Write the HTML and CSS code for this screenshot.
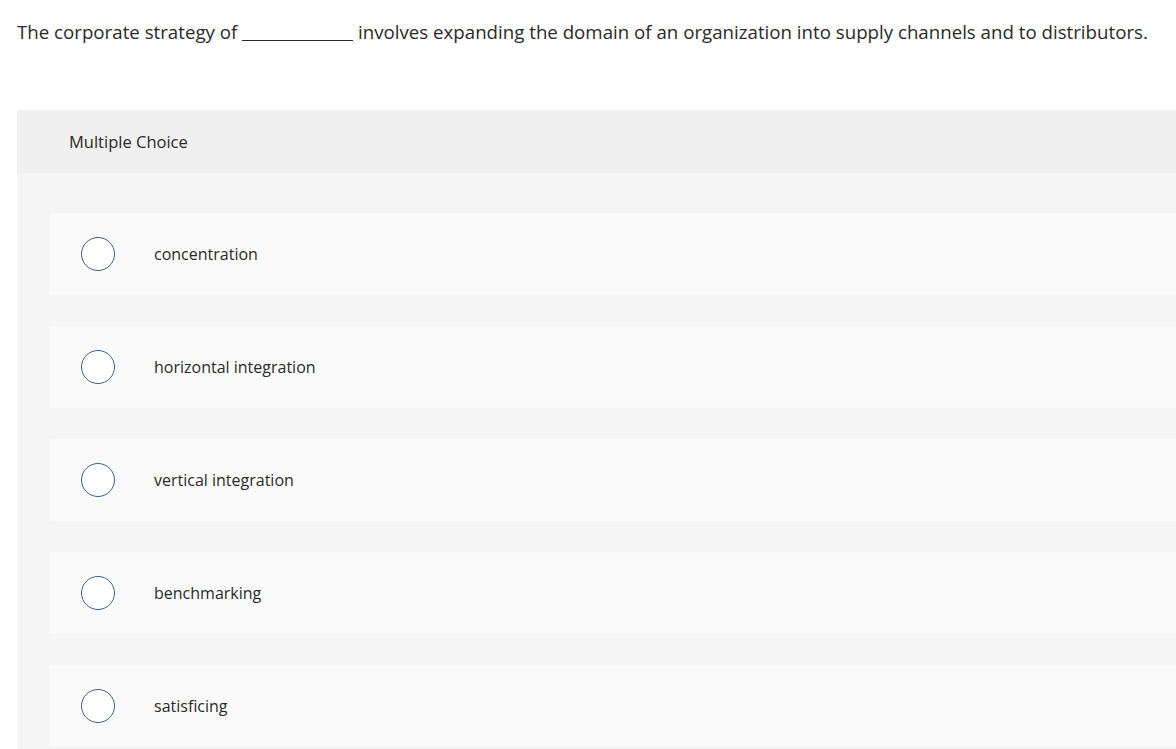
FILE: index.html
```html
<!DOCTYPE html>
<html>
<head>
<meta charset="utf-8">
<link rel="stylesheet" href="styles.css">
</head>
<body>
<div class="page">
  <p class="question">The corporate strategy of <span class="blank"></span> involves expanding the domain of an organization into supply channels and to distributors.</p>
  <div class="panel">
    <div class="panel-head">Multiple Choice</div>
    <div class="panel-body">
      <div class="option"><span class="radio"></span><span class="label">concentration</span></div>
      <div class="option"><span class="radio"></span><span class="label">horizontal integration</span></div>
      <div class="option"><span class="radio"></span><span class="label">vertical integration</span></div>
      <div class="option"><span class="radio"></span><span class="label">benchmarking</span></div>
      <div class="option"><span class="radio"></span><span class="label">satisficing</span></div>
    </div>
  </div>
</div>
</body>
</html>
```
FILE: styles.css
```css
html, body {
  margin: 0;
  padding: 0;
  background: #ffffff;
  overflow: hidden;
}
body {
  font-family: "Open Sans", "Liberation Sans", sans-serif;
  color: #2a2a2a;
}
.page {
  padding: 0 0 0 17px;
  width: 1220px;
}
.question {
  margin: 0;
  padding-top: 20px;
  height: 110px;
  box-sizing: border-box;
  font-size: 18.7px;
  line-height: 24px;
  white-space: nowrap;
}
.blank {
  display: inline-block;
  width: 111px;
  border-bottom: 1px solid #2a2a2a;
  vertical-align: -2px;
}
.panel {
  border-radius: 4px 0 0 0;
  overflow: hidden;
  width: 1200px;
}
.panel-head {
  background: #f0f0f0;
  height: 63px;
  padding-left: 52px;
  display: flex;
  align-items: center;
  font-size: 16.5px;
}
.panel-body {
  background: #f5f5f5;
  padding: 40px 0 2px 32px;
  display: flex;
  flex-direction: column;
  gap: 31px;
}
.option {
  background: #fafafa;
  height: 82px;
  border-radius: 3px 0 0 3px;
  display: flex;
  align-items: center;
  padding-left: 32px;
}
.radio {
  width: 32px;
  height: 32px;
  border: 1.5px solid #3f5f7f;
  border-radius: 50%;
  background: #ffffff;
  flex: none;
}
.label {
  margin-left: 39px;
  font-size: 16px;
}
```
